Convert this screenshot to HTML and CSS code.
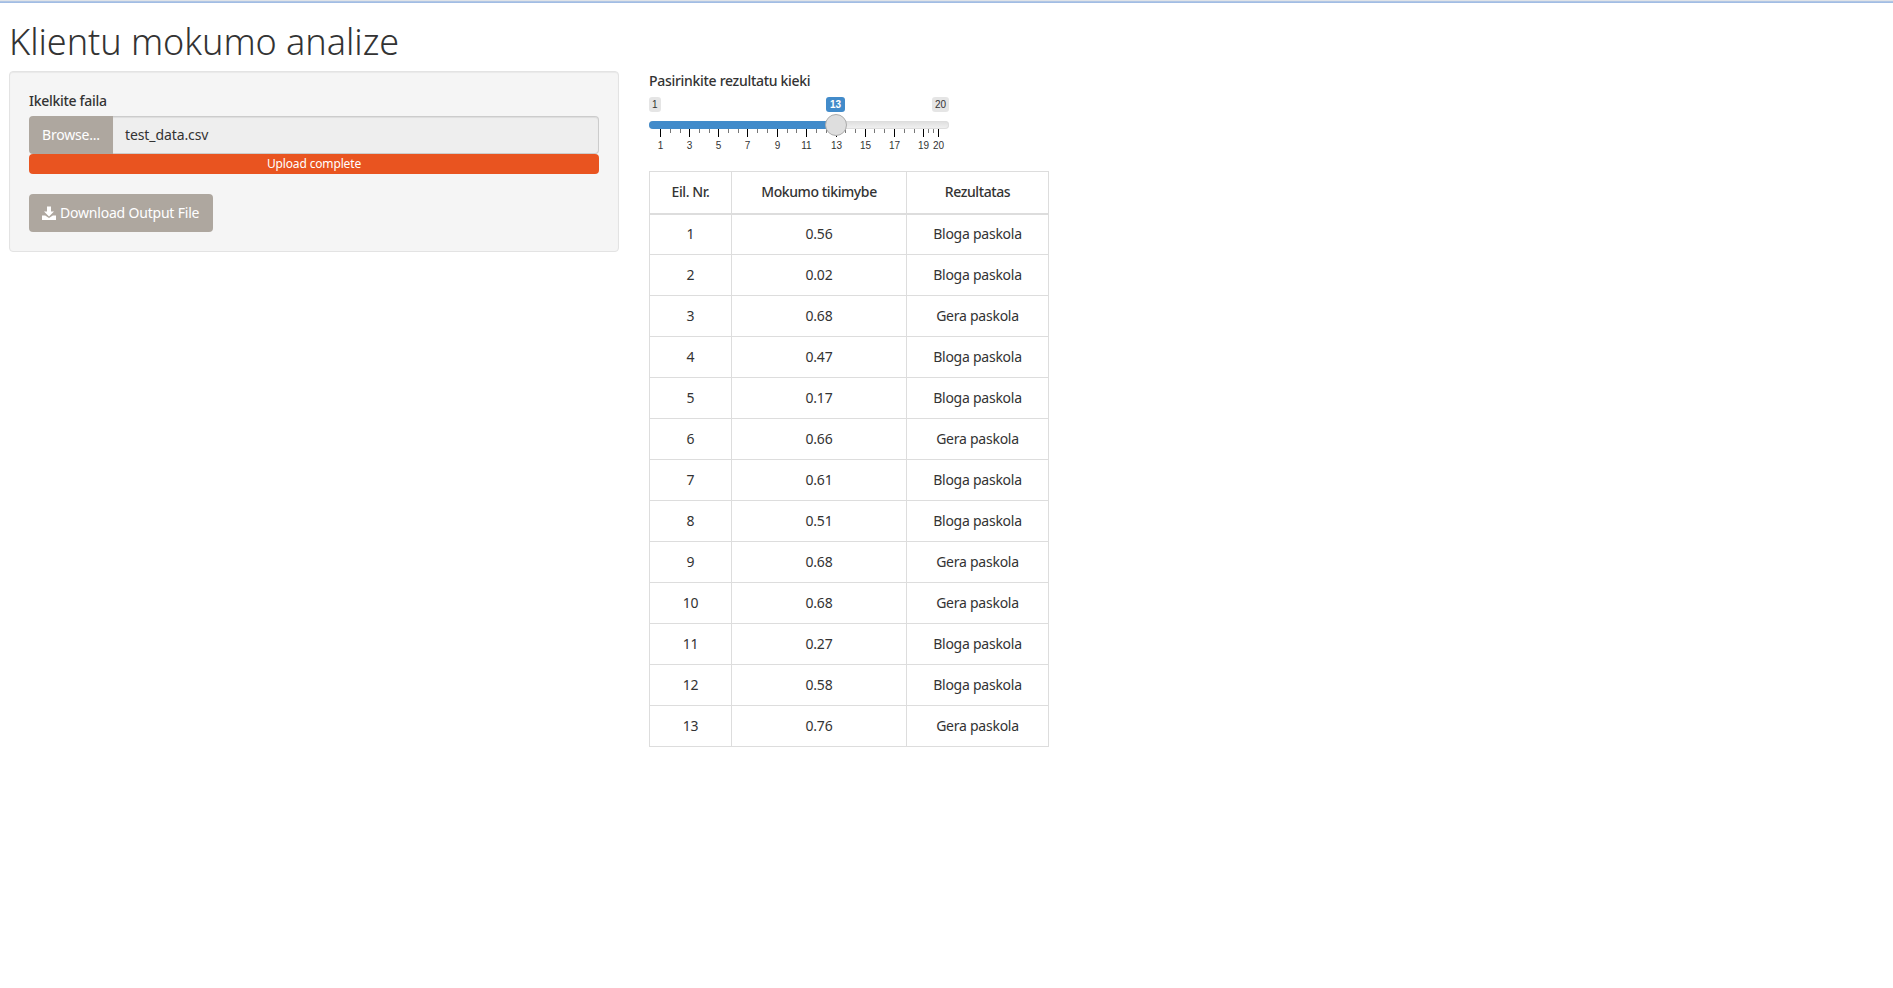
FILE: index.html
```html
<!DOCTYPE html>
<html lang="lt">
<head>
<meta charset="utf-8">
<title>Klientu mokumo analize</title>
<link rel="stylesheet" href="styles.css">
</head>
<body>
<div class="topline"></div>
<h2 class="title">Klientu mokumo analize</h2>
<div class="layout">
  <div class="well">
    <label class="lbl">Ikelkite faila</label>
    <div class="file-row">
      <span class="browse">Browse...</span>
      <span class="file-name">test_data.csv</span>
    </div>
    <div class="progress">Upload complete</div>
    <a class="dl">
      <svg class="dl-icon" viewBox="0 0 14 14"><path d="M5 0.5h4v5h3L7 10.5 2 5.5h3z"/><path d="M0 9.5h3.2L7 12l3.8-2.5H14V14H0z"/></svg>
      Download Output File
    </a>
  </div>
  <div class="main">
    <label class="lbl slider-lbl">Pasirinkite rezultatu kieki</label>
    <div class="slider">
      <span class="badge min">1</span>
      <span class="badge cur">13</span>
      <span class="badge max">20</span>
      <div class="track"><div class="fill"></div></div>
      <svg class="ticks" width="300" height="20" viewBox="0 0 300 20">
        <path class="major" d="M11.5 0v8M40.5 0v8M69.5 0v8M98.5 0v8M128.5 0v8M157.5 0v8M187.5 0v8M216.5 0v8M245.5 0v8M274.5 0v8M289.5 0v8"/>
        <path class="minor" d="M21.5 0v4M31.5 0v4M50.5 0v4M60.5 0v4M79.5 0v4M89.5 0v4M108.5 0v4M118.5 0v4M138.5 0v4M147.5 0v4M167.5 0v4M177.5 0v4M196.5 0v4M206.5 0v4M225.5 0v4M235.5 0v4M255.5 0v4M265.5 0v4M279.5 0v4M284.5 0v4"/>
      </svg>
      <div class="handle"></div>
      <div class="tick-labels">
        <span class="tl t1">1</span><span class="tl t3">3</span><span class="tl t5">5</span><span class="tl t7">7</span><span class="tl t9">9</span><span class="tl t11">11</span><span class="tl t13">13</span><span class="tl t15">15</span><span class="tl t17">17</span><span class="tl t19">19</span><span class="tl t20">20</span>
      </div>
    </div>
    <table class="results">
      <thead><tr><th>Eil. Nr.</th><th>Mokumo tikimybe</th><th>Rezultatas</th></tr></thead>
      <tbody>
        <tr><td>1</td><td>0.56</td><td>Bloga paskola</td></tr>
        <tr><td>2</td><td>0.02</td><td>Bloga paskola</td></tr>
        <tr><td>3</td><td>0.68</td><td>Gera paskola</td></tr>
        <tr><td>4</td><td>0.47</td><td>Bloga paskola</td></tr>
        <tr><td>5</td><td>0.17</td><td>Bloga paskola</td></tr>
        <tr><td>6</td><td>0.66</td><td>Gera paskola</td></tr>
        <tr><td>7</td><td>0.61</td><td>Bloga paskola</td></tr>
        <tr><td>8</td><td>0.51</td><td>Bloga paskola</td></tr>
        <tr><td>9</td><td>0.68</td><td>Gera paskola</td></tr>
        <tr><td>10</td><td>0.68</td><td>Gera paskola</td></tr>
        <tr><td>11</td><td>0.27</td><td>Bloga paskola</td></tr>
        <tr><td>12</td><td>0.58</td><td>Bloga paskola</td></tr>
        <tr><td>13</td><td>0.76</td><td>Gera paskola</td></tr>
      </tbody>
    </table>
  </div>
</div>
</body>
</html>
```

FILE: styles.css
```css
* { box-sizing: border-box; }
html, body { margin: 0; padding: 0; background: #fff; }
body { font-family: "Noto Sans", "Open Sans", sans-serif; font-size: 14px; color: #333; height: 988px; overflow: hidden; }
.topline { height: 3px; background: linear-gradient(#dfe3e8 0, #dfe3e8 1px, #b9cbe4 1px, #9ab8e4 3px); }
.title { margin: 0; padding: 0 0 0 9px; height: 68px; line-height: 78px; font-size: 36px; font-weight: 300; color: #333; letter-spacing: -0.05px; }
.layout { display: flex; align-items: flex-start; padding-left: 9px; gap: 30px; }
.well { width: 610px; height: 181px; padding: 19px; background: #f5f5f5; border: 1px solid #e3e3e3; border-radius: 4px; box-shadow: inset 0 1px 1px rgba(0,0,0,.05); }
.lbl { display: block; font-weight: 500; font-size: 14px; line-height: 20px; color: #333; letter-spacing: -0.3px; }
.well .lbl { margin: 0 0 5px; }
.file-row { display: flex; height: 38px; width: 570px; }
.browse { width: 84px; padding-bottom: 1px; background: #aea79f; color: #fff; display: flex; align-items: center; justify-content: center; border-radius: 4px 0 0 4px; letter-spacing: -0.2px; }
.file-name { flex: 1; background: #eee; border: 1px solid #ccc; border-left: 0; border-radius: 0 4px 4px 0; padding-left: 12px; line-height: 36px; box-shadow: inset 0 1px 1px rgba(0,0,0,.075); letter-spacing: -0.1px; }
.progress { width: 570px; height: 20px; background: #e95420; color: #fff; border-radius: 4px; text-align: center; font-size: 12px; line-height: 20px; letter-spacing: -0.15px; }
.dl { display: inline-flex; align-items: center; gap: 4px; height: 38px; width: 184px; margin-top: 20px; padding: 0 0 1px 13px; background: #aea79f; color: #fff; border-radius: 4px; letter-spacing: -0.2px; }
.dl-icon { width: 14px; height: 14px; fill: #fff; }
.main { width: 399px; }
.slider-lbl { line-height: 18px; padding-top: 1px; height: 19px; }
.slider { position: relative; width: 300px; height: 75px; margin-bottom: 6px; }
.badge { position: absolute; top: 7px; height: 15px; padding: 0 3px; border-radius: 3px; background: rgba(0,0,0,.1); font: 10px/15px "Liberation Sans", Arial, sans-serif; color: #333; }
.badge.min { left: 0; }
.badge.max { right: 0; }
.badge.cur { left: 177px; padding: 0 4px; background: #428bca; color: #fff; font-weight: 700; }
.track { position: absolute; left: 0; right: 0; top: 31px; height: 8px; background: linear-gradient(#ddd, #f2f2f2); border-radius: 4px; overflow: hidden; box-shadow: inset 0 0 0 1px #ddd; }
.fill { width: 187px; height: 8px; background: #428bca; }
.handle { position: absolute; left: 176px; top: 24px; width: 22px; height: 22px; border-radius: 50%; background: #dedede; border: 1px solid #ababab; }
.ticks { position: absolute; left: 0; top: 39px; }
.major { stroke: #000; stroke-width: 1; fill: none; }
.minor { stroke: #777; stroke-width: 1; fill: none; }
.tick-labels { position: absolute; left: 0; top: 49px; width: 300px; height: 14px; }
.tl { position: absolute; transform: translateX(-50%); font: 10px/14px "Liberation Sans", Arial, sans-serif; color: #333; }
.t1 { left: 11.5px; } .t3 { left: 40.5px; } .t5 { left: 69.5px; } .t7 { left: 98.5px; } .t9 { left: 128.5px; } .t11 { left: 157.5px; }
.t13 { left: 187.5px; } .t15 { left: 216.5px; } .t17 { left: 245.5px; } .t19 { left: 274.5px; } .t20 { left: 289.5px; }
.results { border-collapse: collapse; table-layout: fixed; width: 399px; letter-spacing: -0.25px; }
.results th, .results td { border: 1px solid #ddd; text-align: center; padding: 0 0 1px; height: 41px; font-size: 14px; }
.results th { font-weight: 500; border-bottom-width: 2px; height: 42px; letter-spacing: -0.4px; }
.results th:nth-child(1) { width: 82px; }
.results th:nth-child(2) { width: 175px; }
.results th:nth-child(3) { width: 142px; }
```
